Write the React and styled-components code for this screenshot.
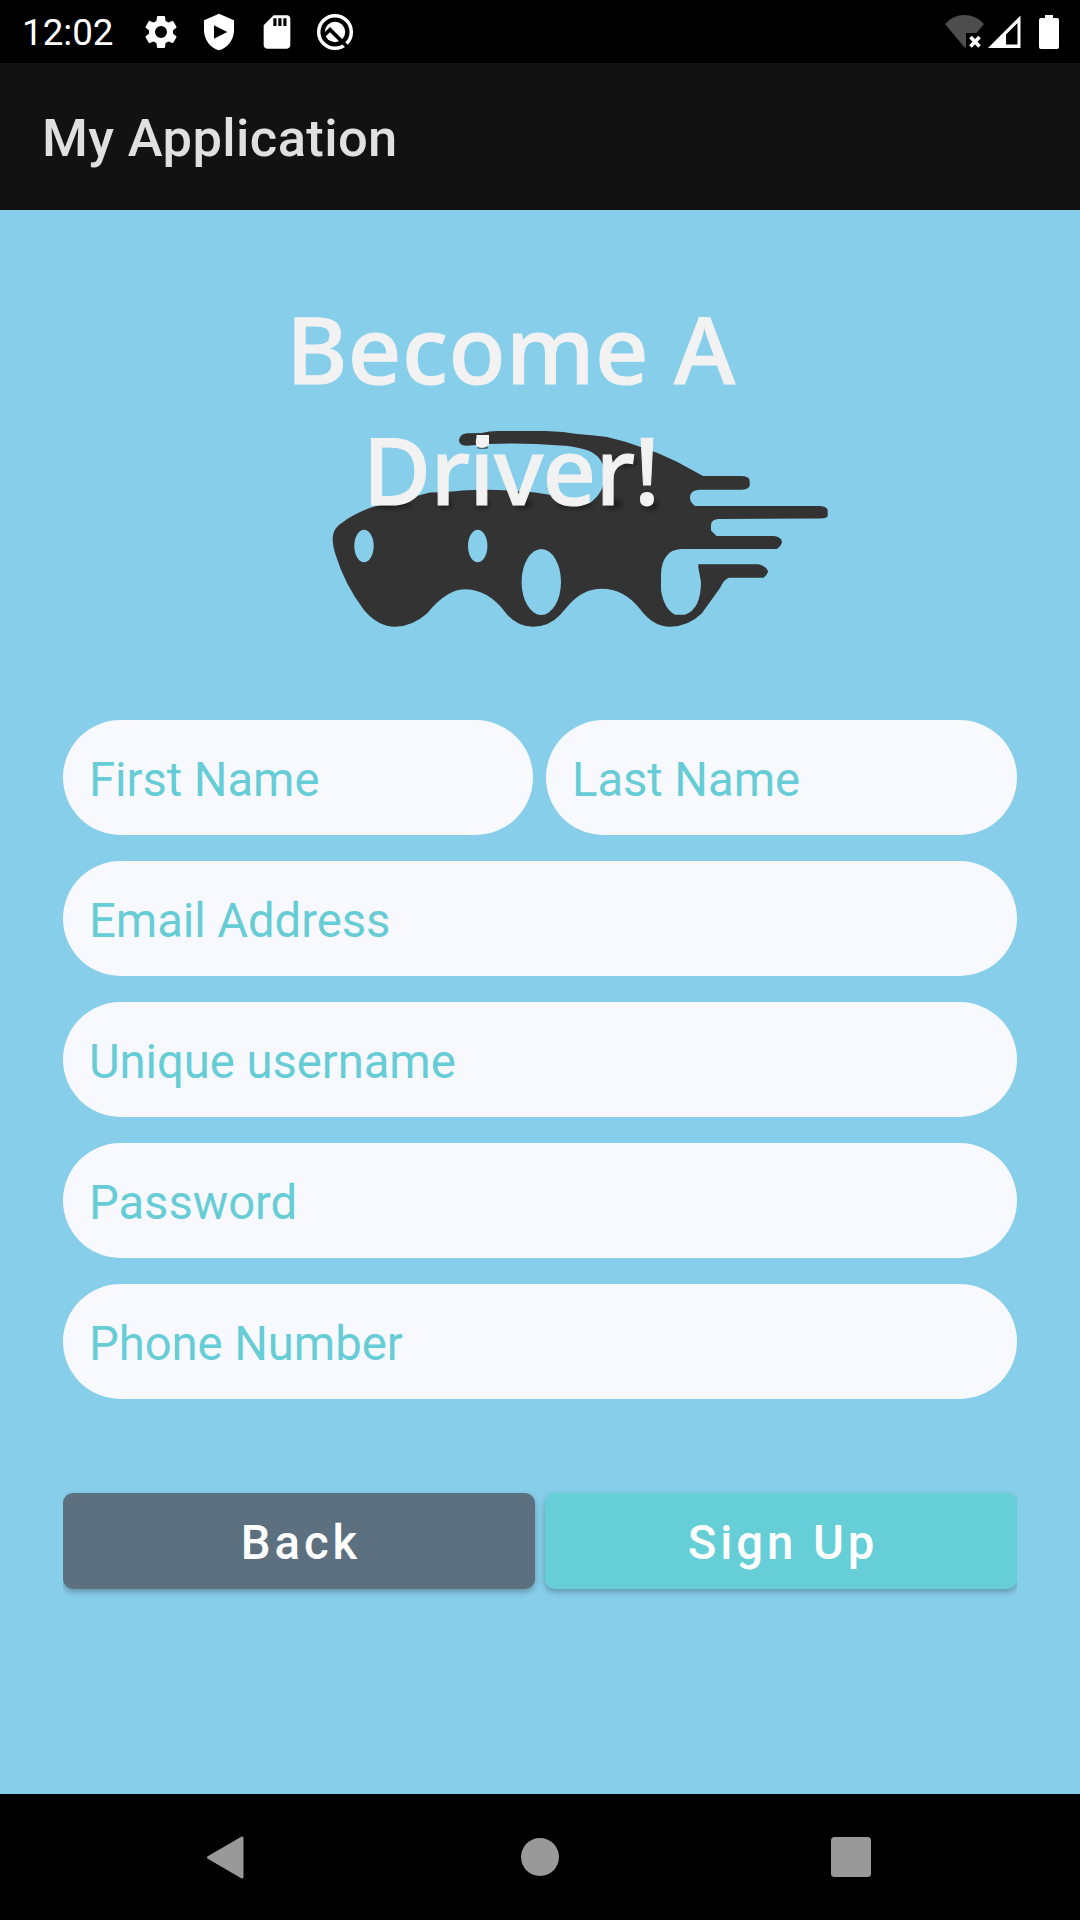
import React from "react";
import styled, { createGlobalStyle } from "styled-components";

const GlobalStyle = createGlobalStyle`
  *, *::before, *::after { box-sizing: border-box; }
  body { margin: 0; background: #000; font-family: Roboto, sans-serif; }
`;

const Screen = styled.div`
  display: flex;
  flex-direction: column;
  width: 1080px;
  height: 1920px;
  overflow: hidden;
  background: #87ceeb;
`;

const StatusBar = styled.header`
  display: flex;
  align-items: center;
  justify-content: space-between;
  height: 63px;
  padding: 0 21px 0 22px;
  background: #000;
`;

const StatusGroup = styled.div`
  display: flex;
  align-items: center;
  gap: ${(p) => p.$gap}px;
`;

const Clock = styled.time`
  width: 101px;
  font-size: 36.75px;
  line-height: 43px;
  color: #fff;
  padding-top: 2px;
`;

const AppBar = styled.div`
  display: flex;
  align-items: center;
  height: 147px;
  padding: 2px 42px 0;
  background: #121212;
`;

const AppTitle = styled.span`
  font-size: 52.5px;
  font-weight: 500;
  line-height: 62px;
  letter-spacing: 0.38px;
  color: #e0e0e0;
`;

const Content = styled.main`
  display: flex;
  flex: 1;
  flex-direction: column;
  padding: 79px 63px 0;
`;

const Hero = styled.section`
  display: grid;
  height: 431px;
  justify-items: start;
`;

const CarLogo = styled.svg`
  grid-area: 1 / 1;
  width: 500px;
  height: 205px;
  margin: 136px 0 0 267px;
`;

const Heading = styled.h1`
  grid-area: 1 / 1;
  z-index: 1;
  width: 510px;
  margin: -1px 0 0 193px;
  font-family: "Noto Sans", sans-serif;
  font-size: 93.5px;
  font-weight: 500;
  line-height: 120.5px;
  text-align: center;
  color: #f2f2f2;
  -webkit-text-stroke: 1px #f2f2f2;
`;

const HeadingLine = styled.span`
  display: block;
  letter-spacing: ${(p) => p.$spacing}px;
`;

const Form = styled.form`
  display: flex;
  flex-direction: column;
  gap: 26px;
`;

const NameRow = styled.div`
  display: grid;
  grid-template-columns: 470px 1fr;
  gap: 13px;
`;

const Field = styled.input`
  width: 100%;
  height: 115px;
  padding: 4px 26px 0;
  border: 0;
  border-radius: 57.5px;
  outline: 0;
  background: #f8f8ff;
  font-family: Roboto, sans-serif;
  font-size: 47.25px;
  letter-spacing: -0.07px;
  color: #66cdd6;
  &::placeholder { color: #66cdd6; opacity: 1; }
`;

const Actions = styled.div`
  display: flex;
  gap: 10px;
  align-items: flex-start;
  height: 110px;
  margin-top: 68px;
  clip-path: inset(-10px 0 0 0);
`;

const Button = styled.button`
  flex: 1;
  height: 96px;
  padding: 3px 0 0 4px;
  border: 0;
  border-radius: 10px;
  background: ${(p) => (p.$primary ? "#66ced6" : "#5d707f")};
  box-shadow: 0 3px 6px rgba(0, 0, 0, 0.28);
  font-family: Roboto, sans-serif;
  font-size: 47.25px;
  font-weight: 500;
  letter-spacing: 3.95px;
  color: #fff;
`;

const NavBar = styled.nav`
  display: flex;
  align-items: center;
  justify-content: space-between;
  height: 126px;
  padding: 0 199px;
  background: #000;
`;

const GearIcon = () => (
  <svg width="40" height="40" viewBox="0 0 24 24" fill="#fff">
    <path d="M19.14 12.94c.04-.3.06-.61.06-.94s-.02-.64-.07-.94l2.03-1.58c.18-.14.23-.41.12-.61l-1.92-3.32c-.12-.22-.37-.29-.59-.22l-2.39.96c-.5-.38-1.03-.7-1.62-.94l-.36-2.54c-.04-.24-.24-.41-.48-.41h-3.84c-.24 0-.43.17-.47.41l-.36 2.54c-.59.24-1.13.57-1.62.94l-2.39-.96c-.22-.08-.47 0-.59.22L2.740 8.870c-.12.21-.08.47.12.61l2.03 1.58c-.05.3-.09.63-.09.94s.02.64.07.94l-2.03 1.58c-.18.14-.23.41-.12.61l1.92 3.32c.12.22.37.29.59.22l2.39-.96c.5.38 1.03.7 1.62.94l.36 2.54c.05.24.24.41.48.41h3.84c.24 0 .44-.17.47-.41l.36-2.54c.59-.24 1.13-.56 1.62-.94l2.39.96c.22.08.47 0 .59-.22l1.92-3.32c.12-.22.07-.47-.12-.61zM12 15.6A3.6 3.6 0 1 1 12 8.4a3.6 3.6 0 0 1 0 7.2z" />
  </svg>
);

const ShieldIcon = () => (
  <svg width="40" height="40" viewBox="0 0 24 24" fill="#fff">
    <path fillRule="evenodd" d="M12 1L3 5v6c0 5.55 3.84 10.74 9 12 5.16-1.26 9-6.45 9-12V5zM9 7.9l8 4.100-8 4.100z" />
  </svg>
);

const CardIcon = () => (
  <svg width="40" height="40" viewBox="0 0 24 24" fill="#fff">
    <path fillRule="evenodd" d="M18 2h-8L4 8v12c0 1.100.9 2 2 2h12c1.100 0 2-.9 2-2V4c0-1.100-.9-2-2-2zM9.800 3.800h1.900v4.600h-1.900zM12.800 3.800h1.900v4.600h-1.900zM15.800 3.800h1.900v4.600h-1.900z" />
  </svg>
);

const DebugIcon = () => (
  <svg width="40" height="40" viewBox="0 0 40 40">
    <circle cx="20" cy="20" r="16.300" fill="none" stroke="#fff" strokeWidth="3.500" />
    <circle cx="20" cy="20" r="10.200" fill="#fff" />
    <path d="M8.500 24L15 17.700L32.500 35" fill="none" stroke="#000" strokeWidth="3.700" />
  </svg>
);

const WifiOffIcon = () => (
  <svg width="40" height="36" viewBox="0 0 40 36">
    <path d="M0 10Q8 1 19.500 1T39 10L31.500 19H21V33.500L19.500 33.500z" fill="#4d4d4d" />
    <path d="M25.500 23l9 9.500M34.500 23l-9 9.500" stroke="#fff" strokeWidth="3.600" />
  </svg>
);

const SignalIcon = () => (
  <svg width="33" height="36" viewBox="0 0 33 36">
    <path fillRule="evenodd" fill="#fff" d="M0 34L32.500 1.500V34zM18 20.500V30.500H29.500V9z" />
  </svg>
);

const BatteryIcon = () => (
  <svg width="20" height="36" viewBox="0 0 20 36">
    <path fill="#fff" d="M6 1h8v3h4q2 0 2 2v27q0 2-2 2H2q-2 0-2-2V6q0-2 2-2h4z" />
  </svg>
);

const CAR_PATH = `M459 440Q460 434 467 433.300L481.700 433Q489 431 497 431H545L563 432
  L577 434Q592 435 607 437Q625 441 642 447.500L657 452.700L677 461.700L703 476H740Q749.700 476 749.700 481V485
  Q749.700 489.700 740 489.700H699Q690 490 690 498Q690 502 695 506H820Q827.700 506.500 827.700 511V516Q827 518.500 820 518.500L718 519
  Q711 520 711 525V530.500L716.500 536H774Q782 537 782 542.500Q781 546 777 549H681Q671 549.500 666.500 556Q661 563 661 575V590
  Q664 609 675 614.700H685Q701 609 701 582L698.300 567.500V564.300H758Q765 565 768.300 571.500Q767 575 763.500 577.700H729
  Q724 579 720 588L701.700 613.500Q688 626.700 670 626.700Q653 626.700 640 609Q624 588.700 601.500 588.700Q584 588.700 570 603.500L560 615
  Q549 626.700 533 626.700Q516 626.700 505 612Q488 589.300 464.300 589.300Q447 589.300 427 613.500Q412 626.700 395 626.700
  Q378 626.700 364 610Q345 585 336 556C331 541 331 530 341 523.500Q353 514 371 507.500L430 492.500
  Q449 492 462 490.500Q480 489.500 497 490Q534 491 556.500 496L590 503Q604.700 492 604.700 475Q604 455 585 449.500
  Q570 445.700 560 445.500Q510 441.500 467 445.700Q459 446 459 440Z
  M354.300 546a9.700 16.300 0 1 0 19.400 0a9.700 16.300 0 1 0 -19.400 0Z
  M468 546a9.700 16.300 0 1 0 19.400 0a9.700 16.300 0 1 0 -19.400 0Z
  M521.600 582a19.700 33 0 1 0 39.400 0a19.700 33 0 1 0 -39.400 0Z`;

const LETTER_SHADOWS = [
  [391, 504, 21], [445, 504, 7], [483, 504, 7], [523, 504, 9],
  [575, 504, 17], [614, 504, 8], [650, 505, 9], [625, 462, 12],
];

const Car = () => (
  <CarLogo viewBox="330 425 500 205">
    <defs>
      <clipPath id="body"><path d={CAR_PATH} clipRule="evenodd" /></clipPath>
      <filter id="soft" x="-50%" y="-150%" width="200%" height="400%"><feGaussianBlur stdDeviation="2.500" /></filter>
    </defs>
    <path d={CAR_PATH} fill="#333" fillRule="evenodd" />
    <g clipPath="url(#body)">
      {LETTER_SHADOWS.map(([x, y, r]) => (
        <ellipse key={`${x}-${y}`} cx={x} cy={y} rx={r} ry="5" fill="#000" opacity="0.4" filter="url(#soft)" />
      ))}
    </g>
    <ellipse cx="482.700" cy="447.500" rx="5.500" ry="1.500" fill="#4b6570" />
    <rect x="476.500" y="435" width="12.500" height="10.700" fill="#f2f2f2" />
  </CarLogo>
);

const BackGlyph = () => (
  <svg width="50" height="50" viewBox="0 0 50 50">
    <path d="M9.500 25.500L43 6v39z" fill="#999" stroke="#999" strokeWidth="3" strokeLinejoin="round" />
  </svg>
);
const HomeGlyph = () => (
  <svg width="50" height="50" viewBox="0 0 50 50"><circle cx="25" cy="25" r="19" fill="#999" /></svg>
);
const RecentsGlyph = () => (
  <svg width="50" height="50" viewBox="0 0 50 50"><rect x="0" y="5" width="40" height="40" rx="3.500" fill="#999" /></svg>
);

export default function App() {
  return (
    <Screen>
      <GlobalStyle />
      <StatusBar>
        <StatusGroup $gap={18}>
          <Clock>12:02</Clock>
          <GearIcon />
          <ShieldIcon />
          <CardIcon />
          <DebugIcon />
        </StatusGroup>
        <StatusGroup $gap={18}>
          <StatusGroup $gap={3}>
            <WifiOffIcon />
            <SignalIcon />
          </StatusGroup>
          <BatteryIcon />
        </StatusGroup>
      </StatusBar>
      <AppBar><AppTitle>My Application</AppTitle></AppBar>
      <Content>
        <Hero>
          <Car />
          <Heading>
            <HeadingLine $spacing={0.5}>Become A</HeadingLine>
            <HeadingLine $spacing={-0.7}>Driver!</HeadingLine>
          </Heading>
        </Hero>
        <Form onSubmit={(e) => e.preventDefault()}>
          <NameRow>
            <Field placeholder="First Name" />
            <Field placeholder="Last Name" />
          </NameRow>
          <Field placeholder="Email Address" />
          <Field placeholder="Unique username" />
          <Field placeholder="Password" type="password" />
          <Field placeholder="Phone Number" />
          <Actions>
            <Button type="button">Back</Button>
            <Button $primary type="submit">Sign Up</Button>
          </Actions>
        </Form>
      </Content>
      <NavBar>
        <BackGlyph />
        <HomeGlyph />
        <RecentsGlyph />
      </NavBar>
    </Screen>
  );
}
